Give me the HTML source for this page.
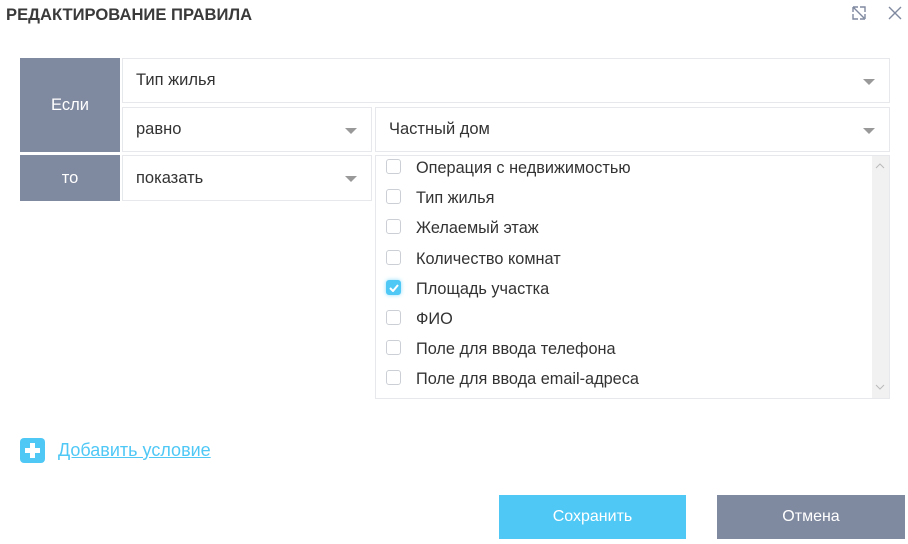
<!DOCTYPE html><html><head><meta charset="utf-8"><style>
body{margin:0;width:908px;height:544px;background:#fff;font-family:"Liberation Sans",Roboto,sans-serif;position:relative;overflow:hidden;color:#333}
.a{position:absolute;box-sizing:border-box}
.lab{background:#7f899f;color:#fff;font-size:16.5px;display:flex;align-items:center;justify-content:center}
.sel{border:1px solid #e6e8ec;font-size:16.5px;padding-left:13px;display:flex;align-items:center;color:#333}
.car{position:absolute;right:14px;top:50%;margin-top:-2px;width:0;height:0;border-left:6px solid transparent;border-right:6px solid transparent;border-top:6px solid #999}
.it{position:absolute;left:10px;font-size:16.3px;color:#333;height:20px;line-height:20px;white-space:nowrap}
.cb{display:inline-block;width:15px;height:15px;border:1px solid #ccd0d6;border-radius:3px;vertical-align:middle;margin-right:15px;box-sizing:border-box;position:relative;top:-2px}
.cb.on{background:#4fc8f6;border-color:#4fc8f6;box-shadow:0 0 4px #8fdcfb}
.btn{color:#fff;font-size:16px;display:flex;align-items:center;justify-content:center}
</style></head><body>
<div class="a" style="left:6px;top:5px;font-size:16.6px;font-weight:bold;color:#3a3a3a">РЕДАКТИРОВАНИЕ ПРАВИЛА</div>
<svg class="a" style="left:851px;top:5px" width="16" height="16" viewBox="0 0 16 16"><path d="M2 2h5M2 2v5M2 2l11 11M14 14H9M14 14V9M9 2h5v5M2 9v5h5" stroke="#7f899f" stroke-width="1.4" fill="none"/></svg>
<svg class="a" style="left:888px;top:6px" width="14" height="14" viewBox="0 0 14 14"><path d="M1 1l12 12M13 1L1 13" stroke="#7f899f" stroke-width="1.4"/></svg>
<div class="a lab" style="left:20px;top:58px;width:100px;height:94px">Если</div>
<div class="a lab" style="left:20px;top:155px;width:100px;height:46px">то</div>
<div class="a sel" style="left:122px;top:58px;width:768px;height:45px">Тип жилья<span class="car"></span></div>
<div class="a sel" style="left:122px;top:107px;width:250px;height:45px">равно<span class="car"></span></div>
<div class="a sel" style="left:375px;top:107px;width:515px;height:45px">Частный дом<span class="car"></span></div>
<div class="a sel" style="left:122px;top:155px;width:250px;height:46px">показать<span class="car"></span></div>
<div class="a" style="left:375px;top:155px;width:515px;height:244px;border:1px solid #e6e8ec">
<div class="a" style="right:0;top:0;width:17px;height:242px;background:#f1f1f1"></div>
<svg class="a" style="right:4px;top:7px" width="10" height="6"><path d="M1 5l4-4 4 4" stroke="#bbb" fill="none"/></svg>
<svg class="a" style="right:4px;bottom:8px" width="10" height="6"><path d="M1 1l4 4 4-4" stroke="#bbb" fill="none"/></svg>
<div class="it" style="top:2px"><span class="cb"></span>Операция с недвижимостью</div>
<div class="it" style="top:32px"><span class="cb"></span>Тип жилья</div>
<div class="it" style="top:62px"><span class="cb"></span>Желаемый этаж</div>
<div class="it" style="top:93px"><span class="cb"></span>Количество комнат</div>
<div class="it" style="top:123px"><span class="cb on"><svg style="position:absolute;left:2px;top:3px" width="10" height="8"><path d="M1 4l3 3 5-6" stroke="#fff" stroke-width="2" fill="none"/></svg></span>Площадь участка</div>
<div class="it" style="top:153px"><span class="cb"></span>ФИО</div>
<div class="it" style="top:183px"><span class="cb"></span>Поле для ввода телефона</div>
<div class="it" style="top:213px"><span class="cb"></span>Поле для ввода email-адреса</div>
</div>
<div class="a" style="left:20px;top:438px;width:25px;height:25px;background:#4fc8f6;border-radius:4px"><div class="a" style="left:10px;top:5px;width:5px;height:15px;background:#fff"></div><div class="a" style="left:5px;top:10px;width:15px;height:5px;background:#fff"></div></div>
<div class="a" style="left:58px;top:440px;font-size:18px;color:#4fc8f6;text-decoration:underline">Добавить условие</div>
<div class="a btn" style="left:499px;top:495px;width:187px;height:44px;background:#4fc8f6">Сохранить</div>
<div class="a btn" style="left:717px;top:495px;width:188px;height:44px;background:#7f899f">Отмена</div>
</body></html>
